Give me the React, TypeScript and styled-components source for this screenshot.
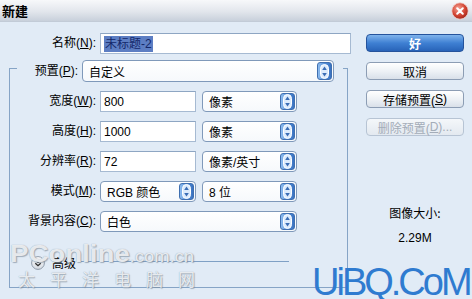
import React from 'react'
import styled, { createGlobalStyle } from 'styled-components'

const GlobalStyle = createGlobalStyle`
  html, body {
    margin: 0;
    padding: 0;
  }
  body {
    background: #e1ebf6;
    font-family: "Liberation Sans", "Noto Sans CJK SC", sans-serif;
    font-size: 12px;
    color: #000;
  }
`

const Dialog = styled.div`
  position: relative;
  width: 472px;
  height: 299px;
  overflow: hidden;
  background: #e1ebf6;
`

const TitleBar = styled.div`
  height: 22px;
  box-sizing: border-box;
  display: flex;
  align-items: center;
  justify-content: space-between;
  padding: 0 3px 0 2px;
  background: linear-gradient(#f7f8fa, #e2e6ec 55%, #c8d0db);
  border-bottom: 1px solid #c2cbd7;
`

const Title = styled.span`
  font-family: "Noto Sans CJK SC", sans-serif;
  font-weight: bold;
  font-size: 13px;
  line-height: 14px;
`

const Body = styled.div`
  display: flex;
`

const LeftCol = styled.div`
  width: 356px;
  box-sizing: border-box;
  padding: 11px 0 0 9px;
`

const NameRow = styled.div`
  display: flex;
  align-items: center;
`

const Label = styled.span<{ $w: number }>`
  width: ${(p) => p.$w}px;
  margin-right: 4px;
  text-align: right;
  white-space: nowrap;
  line-height: 21px;
  font-family: "Liberation Sans", "Noto Sans CJK SC", sans-serif;
`

const Key = styled.span`
  text-decoration: underline;
`

const TextBox = styled.div<{ $w: number }>`
  width: ${(p) => p.$w}px;
  height: 21px;
  box-sizing: border-box;
  border: 1px solid #a6bad2;
  border-top-color: #8ea6c3;
  background: #fff;
  padding-left: 3px;
  display: flex;
  align-items: center;
  font-size: 12px;
`

const Selected = styled.span`
  background: #5d7ec3;
  color: #14286a;
  padding: 1px 1px;
  line-height: 14px;
`

const SelectBox = styled.div<{ $w: number; $h?: number }>`
  width: ${(p) => p.$w}px;
  height: ${(p) => p.$h ?? 21}px;
  box-sizing: border-box;
  border: 1px solid #7f99ba;
  border-radius: 4px;
  background: linear-gradient(#ffffff, #f6f9fc);
  display: flex;
  align-items: stretch;
`

const SelectValue = styled.span`
  flex: 1;
  padding-left: 6px;
  display: flex;
  align-items: center;
  white-space: nowrap;
`

const SpinButton = styled.span`
  width: 15px;
  margin: 1px;
  border-radius: 3px;
  background: linear-gradient(90deg, #8dbbee, #4f8bd6 60%, #3a72c0);
  border: 1px solid #3f6fb0;
  box-sizing: border-box;
  display: flex;
  align-items: center;
  justify-content: center;
`

const Group = styled.fieldset`
  margin: 0;
  padding: 0 0 17px 0;
  width: 339px;
  min-width: 0;
  box-sizing: border-box;
  border: 1px solid #86a4c6;
`

const GroupLegend = styled.legend`
  margin-left: 7px;
  padding: 6px 9px 0 0;
  width: 326px;
  box-sizing: border-box;
  display: flex;
  align-items: center;
`

const Rows = styled.div`
  display: flex;
  flex-direction: column;
  gap: 9px;
  margin-top: 9px;
`

const Row = styled.div`
  display: flex;
  align-items: center;
`

const Fields = styled.div`
  display: flex;
  gap: 6px;
`

const AdvancedRow = styled.div`
  display: flex;
  align-items: center;
  height: 14px;
  margin-top: 24px;
  padding-left: 21px;
`

const AdvancedText = styled.span`
  margin-left: 7px;
  font-family: "Noto Sans CJK SC", sans-serif;
  line-height: 14px;
`

const Rule = styled.span`
  width: 208px;
  height: 1px;
  margin-left: 5px;
  margin-top: -4px;
  background: #7fa0c5;
`

const RightCol = styled.div`
  width: 98px;
  margin-left: 10px;
  padding-top: 12px;
  display: flex;
  flex-direction: column;
  gap: 10px;
`

const Button = styled.div<{ $primary?: boolean; $disabled?: boolean }>`
  height: 18px;
  box-sizing: border-box;
  border-radius: 4px;
  display: flex;
  align-items: center;
  justify-content: center;
  font-family: "Liberation Sans", "Noto Sans CJK SC", sans-serif;
  white-space: nowrap;
  border: 1px solid ${(p) => (p.$primary ? '#25539c' : p.$disabled ? '#b7c4d4' : '#8c9db4')};
  color: ${(p) => (p.$primary ? '#fff' : p.$disabled ? '#a3acb8' : '#000')};
  font-weight: ${(p) => (p.$primary ? 'bold' : 'normal')};
  background: ${(p) =>
    p.$primary
      ? 'linear-gradient(#7fb3ec, #3f80d3 50%, #2863b8)'
      : p.$disabled
        ? 'linear-gradient(#f4f7fa, #e3e9f0)'
        : 'linear-gradient(#ffffff, #eef2f6 50%, #d9e0e9)'};
`

const Info = styled.div`
  margin-top: 60px;
  display: flex;
  flex-direction: column;
  align-items: center;
  gap: 11px;
  line-height: 14px;
`

const InfoLabel = styled.span`
  font-family: "Noto Sans CJK SC", sans-serif;
`

const Watermark = styled.div`
  position: absolute;
  left: 10px;
  top: 242px;
  pointer-events: none;
  color: rgba(255, 255, 255, 0.8);
  text-shadow: 0 0 1px #8c99a8, 1px 1px 1px rgba(120, 135, 150, 0.6);
  font-family: "Liberation Sans", sans-serif;
`

const WmTop = styled.div`
  font-size: 24px;
  font-weight: bold;
  line-height: 24px;
  white-space: nowrap;
  transform: scaleX(1.15);
  transform-origin: left center;
`

const WmSmall = styled.span`
  font-size: 16px;
  font-weight: normal;
`

const WmBottom = styled.div`
  font-family: "Noto Sans CJK SC", sans-serif;
  font-size: 17px;
  line-height: 20px;
  letter-spacing: 15px;
  margin-left: 8px;
  white-space: nowrap;
`

const Brand = styled.div`
  position: absolute;
  left: 312px;
  top: 265px;
  color: #2f7bd0;
  font-family: "Liberation Sans", sans-serif;
  font-size: 38px;
  line-height: 34px;
  letter-spacing: -3px;
  white-space: nowrap;
  pointer-events: none;
`

const CloseIcon = () => (
  <svg width="18" height="18" viewBox="0 0 18 18">
    <defs>
      <radialGradient id="closeGrad" cx="40%" cy="35%" r="70%">
        <stop offset="0" stopColor="#f6a598" />
        <stop offset="0.6" stopColor="#d24432" />
        <stop offset="1" stopColor="#9c2216" />
      </radialGradient>
    </defs>
    <circle cx="9" cy="9" r="8.2" fill="url(#closeGrad)" stroke="#f3d6d2" strokeWidth="0.8" />
    <path d="M6.2 6.2 L11.8 11.8 M11.8 6.2 L6.2 11.8" stroke="#fff" strokeWidth="2" strokeLinecap="round" />
  </svg>
)

const SpinIcon = () => (
  <svg width="9" height="15" viewBox="0 0 9 15">
    <rect x="0.5" y="0.5" width="8" height="14" rx="4" fill="#dcebfc" stroke="#fff" />
    <path d="M4.5 2.6 L2.2 6 L6.8 6 Z" fill="#3a6db5" />
    <path d="M4.5 12.4 L2.2 9 L6.8 9 Z" fill="#3a6db5" />
  </svg>
)

const ExpandIcon = () => (
  <svg width="14" height="14" viewBox="0 0 14 14">
    <defs>
      <linearGradient id="expGrad" x1="0" y1="0" x2="0" y2="1">
        <stop offset="0" stopColor="#ffffff" />
        <stop offset="1" stopColor="#d3d9e1" />
      </linearGradient>
    </defs>
    <circle cx="7" cy="7" r="6.4" fill="url(#expGrad)" stroke="#8e9aa9" />
    <path d="M4.3 3.9 L7 6.4 L9.7 3.9 M4.3 7.2 L7 9.7 L9.7 7.2" fill="none" stroke="#2d2d2d" strokeWidth="1.3" />
  </svg>
)

const Select: React.FC<{ w: number; h?: number; value: string }> = ({ w, h, value }) => (
  <SelectBox $w={w} $h={h}>
    <SelectValue>{value}</SelectValue>
    <SpinButton>
      <SpinIcon />
    </SpinButton>
  </SelectBox>
)

const fieldRows = [
  { label: '宽度', key: 'W', value: '800', unit: '像素' },
  { label: '高度', key: 'H', value: '1000', unit: '像素' },
  { label: '分辨率', key: 'R', value: '72', unit: '像素/英寸' },
]

export default function App() {
  return (
    <Dialog>
      <GlobalStyle />
      <TitleBar>
        <Title>新建</Title>
        <CloseIcon />
      </TitleBar>
      <Body>
        <LeftCol>
          <NameRow>
            <Label $w={87}>
              名称(<Key>N</Key>):
            </Label>
            <TextBox $w={251}>
              <Selected>未标题-2</Selected>
            </TextBox>
          </NameRow>
          <Group>
            <GroupLegend>
              <Label $w={61}>
                预置(<Key>P</Key>):
              </Label>
              <Select w={252} h={22} value="自定义" />
            </GroupLegend>
            <Rows>
              {fieldRows.map((r) => (
                <Row key={r.key}>
                  <Label $w={86}>
                    {r.label}(<Key>{r.key}</Key>):
                  </Label>
                  <Fields>
                    <TextBox $w={96}>{r.value}</TextBox>
                    <Select w={95} value={r.unit} />
                  </Fields>
                </Row>
              ))}
              <Row>
                <Label $w={86}>
                  模式(<Key>M</Key>):
                </Label>
                <Fields>
                  <Select w={96} value="RGB 颜色" />
                  <Select w={95} value="8 位" />
                </Fields>
              </Row>
              <Row>
                <Label $w={86}>
                  背景内容(<Key>C</Key>):
                </Label>
                <Select w={197} value="白色" />
              </Row>
            </Rows>
            <AdvancedRow>
              <ExpandIcon />
              <AdvancedText>高级</AdvancedText>
              <Rule />
            </AdvancedRow>
          </Group>
        </LeftCol>
        <RightCol>
          <Button $primary>好</Button>
          <Button>取消</Button>
          <Button>
            存储预置(<Key>S</Key>)
          </Button>
          <Button $disabled>
            删除预置(<Key>D</Key>)...
          </Button>
          <Info>
            <InfoLabel>图像大小:</InfoLabel>
            <span>2.29M</span>
          </Info>
        </RightCol>
      </Body>
      <Watermark>
        <WmTop>
          PConline<WmSmall>.com.cn</WmSmall>
        </WmTop>
        <WmBottom>太平洋电脑网</WmBottom>
      </Watermark>
      <Brand>UiBQ.CoM</Brand>
    </Dialog>
  )
}
